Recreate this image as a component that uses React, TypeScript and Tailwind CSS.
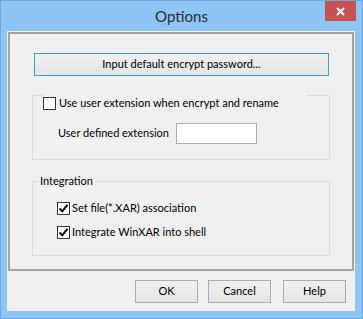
import React from "react";

const Check = ({ checked }: { checked: boolean }) => (
  <div className="w-[13px] h-[13px] border border-[#333333] bg-white flex items-center justify-center shrink-0">
    {checked && (
      <svg width="11" height="11" viewBox="0 0 11 11">
        <path d="M1.5 5.5 L4.2 8.3 L9.5 1.8" stroke="#000" strokeWidth="2" fill="none" />
      </svg>
    )}
  </div>
);

const Btn = ({ label, cls }: { label: string; cls?: string }) => (
  <div
    className={
      "w-[63px] h-[23px] border border-[#acacac] bg-gradient-to-b from-[#f0f0f0] to-[#e5e5e5] flex items-center justify-center text-black " +
      (cls ?? "")
    }
  >
    {label}
  </div>
);

export default function App() {
  return (
    <div
      className="w-[363px] h-[319px] border border-[#6fa8dc] bg-[#8cc5f6] flex flex-col relative text-[11px] text-black whitespace-nowrap"
      style={{ fontFamily: 'Lato, "Noto Sans", sans-serif' }}
    >
      <div className="h-[30px] flex items-center justify-center text-[15px] text-[#2b2b2b]">Options</div>
      <div className="absolute top-0 right-[6px] w-[31px] h-[20px] bg-[#c75050] flex items-center justify-center">
        <svg width="9" height="9" viewBox="0 0 9 9">
          <path d="M1 1 L8 8 M8 1 L1 8" stroke="#fff" strokeWidth="2" />
        </svg>
      </div>
      <div className="ml-[6px] mr-[7px] h-[280px] bg-[#f0f0f0] flex flex-col pt-[1px] px-[1px]">
        <div className="h-[239px] border-2 border-[#a3a3a3] flex flex-col px-[22px] pt-[19px]">
          <div className="ml-[2px] mr-[1px] h-[23px] border border-[#3d9bea] bg-gradient-to-b from-[#f0f0f0] to-[#e5e5e5] flex items-center justify-center">
            Input default encrypt password...
          </div>
          <div className="mt-[19px] h-[65px] border-l border-r border-b border-[#dcdcdc] flex flex-col">
            <div className="h-[16px] flex">
              <div className="w-[10px] h-px bg-[#dcdcdc]" />
              <div className="w-[264px] flex items-center gap-[3px]">
                <Check checked={false} />
                <span>Use user extension when encrypt and rename</span>
              </div>
              <div className="flex-1 h-px bg-[#dcdcdc]" />
            </div>
            <div className="mt-[12px] pl-[25px] flex items-center h-[21px]">
              <span className="w-[118px]">User defined extension</span>
              <div className="w-[81px] h-[21px] border border-[#abadb3] bg-white" />
            </div>
          </div>
          <div className="mt-[21px] h-[75px] border-l border-r border-b border-[#dcdcdc] flex flex-col">
            <div className="-mt-[7px] h-[15px] flex items-center">
              <div className="w-[6px] h-px bg-[#dcdcdc]" />
              <span className="pl-[1px] pr-[2px]">Integration</span>
              <div className="flex-1 h-px bg-[#dcdcdc]" />
            </div>
            <div className="mt-[11px] pl-[24px] h-[16px] flex items-center gap-[2px]">
              <Check checked={true} />
              <span>Set file(*.XAR) association</span>
            </div>
            <div className="mt-[8px] pl-[24px] h-[16px] flex items-center gap-[2px]">
              <Check checked={true} />
              <span>Integrate WinXAR into shell</span>
            </div>
          </div>
        </div>
        <div className="flex justify-end pt-[9px] pr-[8px]">
          <Btn label="OK" />
          <Btn label="Cancel" cls="ml-[10px]" />
          <Btn label="Help" cls="ml-[12px]" />
        </div>
      </div>
    </div>
  );
}
